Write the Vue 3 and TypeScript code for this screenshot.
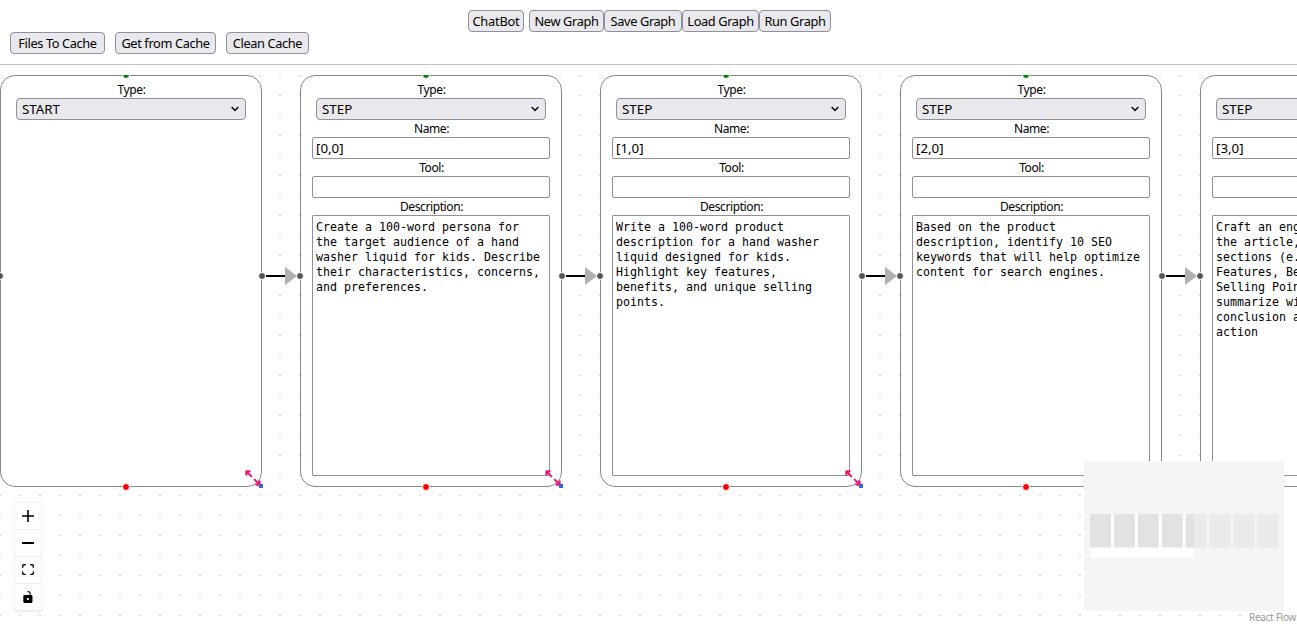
<script setup lang="ts">
interface FlowNode {
  x: number
  type: string
  name?: string
  description?: string
  resizable: boolean
}

const nodes: FlowNode[] = [
  { x: 0, type: 'START', resizable: true },
  {
    x: 300, type: 'STEP', name: '[0,0]', resizable: true,
    description: 'Create a 100-word persona for\nthe target audience of a hand\nwasher liquid for kids. Describe\ntheir characteristics, concerns,\nand preferences.',
  },
  {
    x: 600, type: 'STEP', name: '[1,0]', resizable: true,
    description: 'Write a 100-word product\ndescription for a hand washer\nliquid designed for kids.\nHighlight key features,\nbenefits, and unique selling\npoints.',
  },
  {
    x: 900, type: 'STEP', name: '[2,0]', resizable: false,
    description: 'Based on the product\ndescription, identify 10 SEO\nkeywords that will help optimize\ncontent for search engines.',
  },
  {
    x: 1200, type: 'STEP', name: '[3,0]', resizable: false,
    description: 'Craft an engaging outline for\nthe article, including key\nsections (e.g., Introduction,\nFeatures, Benefits, Unique\nSelling Points) and\nsummarize with a strong\nconclusion and a call to\naction',
  },
]

const graphButtons = ['New Graph', 'Save Graph', 'Load Graph', 'Run Graph']
const cacheButtons = ['Files To Cache', 'Get from Cache', 'Clean Cache']
const graphWidths = [75, 78, 77, 72]
const cacheWidths = [95, 101, 83]
</script>

<template>
  <div class="page">
    <header class="toolbar">
      <div class="row graph-row">
        <button class="btn chat">ChatBot</button>
        <button v-for="(b, i) in graphButtons" :key="b" class="btn" :style="{ width: graphWidths[i] + 'px' }">{{ b }}</button>
      </div>
      <div class="row cache-row">
        <button v-for="(b, i) in cacheButtons" :key="b" class="btn" :style="{ width: cacheWidths[i] + 'px' }">{{ b }}</button>
      </div>
    </header>

    <main class="flow">
      <svg class="dots" width="1297" height="551">
        <defs>
          <pattern id="dot-grid" x="-10" y="-10" width="20" height="20" patternUnits="userSpaceOnUse">
            <circle cx="10" cy="10.3" r="0.8" fill="#c8c8cc" />
          </pattern>
        </defs>
        <rect width="1297" height="551" fill="url(#dot-grid)" />
      </svg>

      <section v-for="n in nodes" :key="n.x" class="node" :style="{ left: n.x + 'px' }">
        <label class="first">Type:</label>
        <div class="select">
          <span>{{ n.type }}</span>
          <svg width="10" height="6" viewBox="0 0 10 6"><path d="M1.6 1 5 4.4 8.4 1" fill="none" stroke="#111" stroke-width="1.5" /></svg>
        </div>
        <template v-if="n.name">
          <label>Name:</label>
          <div class="input">{{ n.name }}</div>
          <label>Tool:</label>
          <div class="input"></div>
          <label>Description:</label>
          <div class="area">{{ n.description }}</div>
        </template>
        <i class="handle top"></i>
        <i class="handle bottom"></i>
        <i class="handle left"></i>
        <i class="handle right"></i>
        <template v-if="n.resizable">
          <svg class="resize" width="20" height="20" viewBox="0 0 24 24" fill="none" stroke="#f5106f" stroke-width="2.4" stroke-linecap="round" stroke-linejoin="round">
            <path d="M16 20h4v-4M14 14l6 6M8 4H4v4M4 4l6 6" />
          </svg>
          <i class="grip"></i>
        </template>
      </section>

      <svg v-for="n in nodes.slice(0, 4)" :key="'e' + n.x" class="edge" :style="{ left: n.x + 262 + 'px' }" width="38" height="20">
        <path d="M4 10H25" stroke="#000" stroke-width="2" />
        <path d="M23 1 35 10 23 19Z" fill="#b1b1b4" />
      </svg>

      <div class="controls">
        <button><svg viewBox="0 0 32 32"><path d="M32 18.133H18.133V32h-4.266V18.133H0v-4.266h13.867V0h4.266v13.867H32z" /></svg></button>
        <button><svg viewBox="0 0 32 5" preserveAspectRatio="none" class="minus"><path d="M0 0h32v5H0z" /></svg></button>
        <button><svg viewBox="0 0 32 30"><path d="M3.692 4.63c0-.53.4-.938.939-.938h5.215V0H4.708C2.13 0 0 2.054 0 4.63v5.216h3.692V4.631zM27.354 0h-5.2v3.692h5.17c.53 0 .984.4.984.939v5.215H32V4.631A4.624 4.624 0 0027.354 0zm.954 24.83c0 .532-.4.94-.939.94h-5.215v3.768h5.215c2.577 0 4.631-2.13 4.631-4.707v-5.139h-3.692v5.139zm-23.677.94c-.531 0-.939-.4-.939-.94v-5.138H0v5.139c0 2.577 2.13 4.707 4.708 4.707h5.138V25.77H4.631z" /></svg></button>
        <button><svg viewBox="0 0 25 32"><path d="M21.333 10.667H19.81V7.619C19.81 3.429 16.38 0 12.19 0c-4.114 1.828-1.37 2.133.305 2.438 1.676.305 4.42 2.59 4.42 5.181v3.048H3.047A3.056 3.056 0 000 13.714v15.238A3.056 3.056 0 003.048 32h18.285a3.056 3.056 0 003.048-3.048V13.714a3.056 3.056 0 00-3.047-3.047zM12.19 24.533a3.056 3.056 0 01-3.047-3.047 3.056 3.056 0 013.047-3.048 3.056 3.056 0 013.048 3.048 3.056 3.056 0 01-3.048 3.047z" /></svg></button>
      </div>

      <svg class="minimap" width="200" height="150">
        <rect width="200" height="150" fill="#f5f5f5" />
        <rect x="6" y="53" width="104" height="44" fill="#fff" />
        <rect v-for="i in 8" :key="i" :x="6 + (i - 1) * 23.9" y="53" width="21" height="33.5" rx="1" fill="#e2e2e2" />
        <rect x="110" y="50" width="84" height="40" fill="#f5f5f5" fill-opacity="0.45" />
      </svg>
      <div class="credit">React Flow</div>
    </main>
  </div>
</template>

<style>
body { margin: 0; overflow: hidden; }
</style>

<style scoped>
.page {
  width: 1297px;
  height: 626px;
  overflow: hidden;
  background: #fff;
  color: #000;
  font-family: "Noto Sans", sans-serif;
  font-size: 12px;
}
.page * { box-sizing: border-box; }
.toolbar {
  height: 65px;
  padding-top: 10px;
  border-bottom: 1px solid #c4c4c6;
}
.row { display: flex; height: 22px; }
.graph-row { padding-left: 468px; }
.cache-row { padding-left: 10px; gap: 10px; }
.btn {
  height: 22px;
  padding: 0;
  border: 1px solid #8f8f9d;
  border-radius: 4px;
  background: #e9e9ed;
  color: #000;
  font: 12.8px/20px "Noto Sans", sans-serif;
  letter-spacing: -0.38px;
  white-space: nowrap;
}
.chat { width: 56px; margin-right: 5px; letter-spacing: -0.2px; }
.flow {
  position: relative;
  height: 551px;
  margin-top: 10px;
  overflow: hidden;
}
.dots { position: absolute; inset: 0; }
.node {
  position: absolute;
  top: 0;
  width: 262px;
  height: 412px;
  padding: 4px 11px 10px;
  display: flex;
  flex-direction: column;
  border: 1px solid #88888b;
  border-radius: 15px;
  background: #fff;
}
label {
  height: 17px;
  padding-left: 1px;
  line-height: 18px;
  font-size: 12px;
  letter-spacing: -0.4px;
  text-align: center;
}
.first { line-height: 20px; }
.select {
  height: 22px;
  margin: 1px 4px 0;
  padding: 0 5px;
  display: flex;
  align-items: center;
  justify-content: space-between;
  border: 1px solid #8f8f9d;
  border-radius: 4px;
  background: #e9e9ed;
  font-size: 13.33px;
}
.input {
  height: 22px;
  padding: 0 3px;
  border: 1px solid #8f8f9d;
  border-radius: 2px;
  font-size: 13.33px;
  line-height: 21px;
}
.area {
  height: 261px;
  padding: 4px 3px 3px;
  border: 1px solid #8f8f9d;
  border-radius: 1px;
  font: 11.63px/15px "DejaVu Sans Mono", monospace;
  white-space: pre;
  overflow: hidden;
}
.handle {
  position: absolute;
  z-index: 3;
  width: 8px;
  height: 8px;
  border: 1px solid #fff;
  border-radius: 50%;
  background: #555;
}
.top { left: 121px; top: -5px; background: #0a800a; }
.bottom { left: 121px; bottom: -5px; background: #f00; }
.left { left: -5px; top: 196px; }
.right { right: -5px; top: 196px; }
.grip {
  position: absolute;
  right: -2px;
  bottom: -2px;
  width: 4px;
  height: 4px;
  background: #3367d9;
}
.resize { position: absolute; left: 242px; top: 392px; }
.edge { position: absolute; top: 191px; z-index: 1; }
.controls {
  position: absolute;
  left: 15px;
  top: 428px;
  width: 26px;
  box-shadow: 0 0 2px 1px rgba(0, 0, 0, 0.08);
}
.controls button {
  width: 26px;
  height: 27px;
  padding: 0;
  display: flex;
  align-items: center;
  justify-content: center;
  border: 0;
  border-bottom: 1px solid #eee;
  background: #fefefe;
}
.controls svg { width: 12px; max-height: 12px; }
.controls .minus { height: 2px; }
.minimap { position: absolute; left: 1084px; top: 386px; z-index: 4; }
.credit {
  position: absolute;
  right: 0;
  bottom: 0;
  z-index: 5;
  padding: 0 1px 2px 3px;
  background: rgba(255, 255, 255, 0.5);
  color: #999;
  font-size: 10px;
  letter-spacing: -0.3px;
  line-height: 13px;
}
</style>
